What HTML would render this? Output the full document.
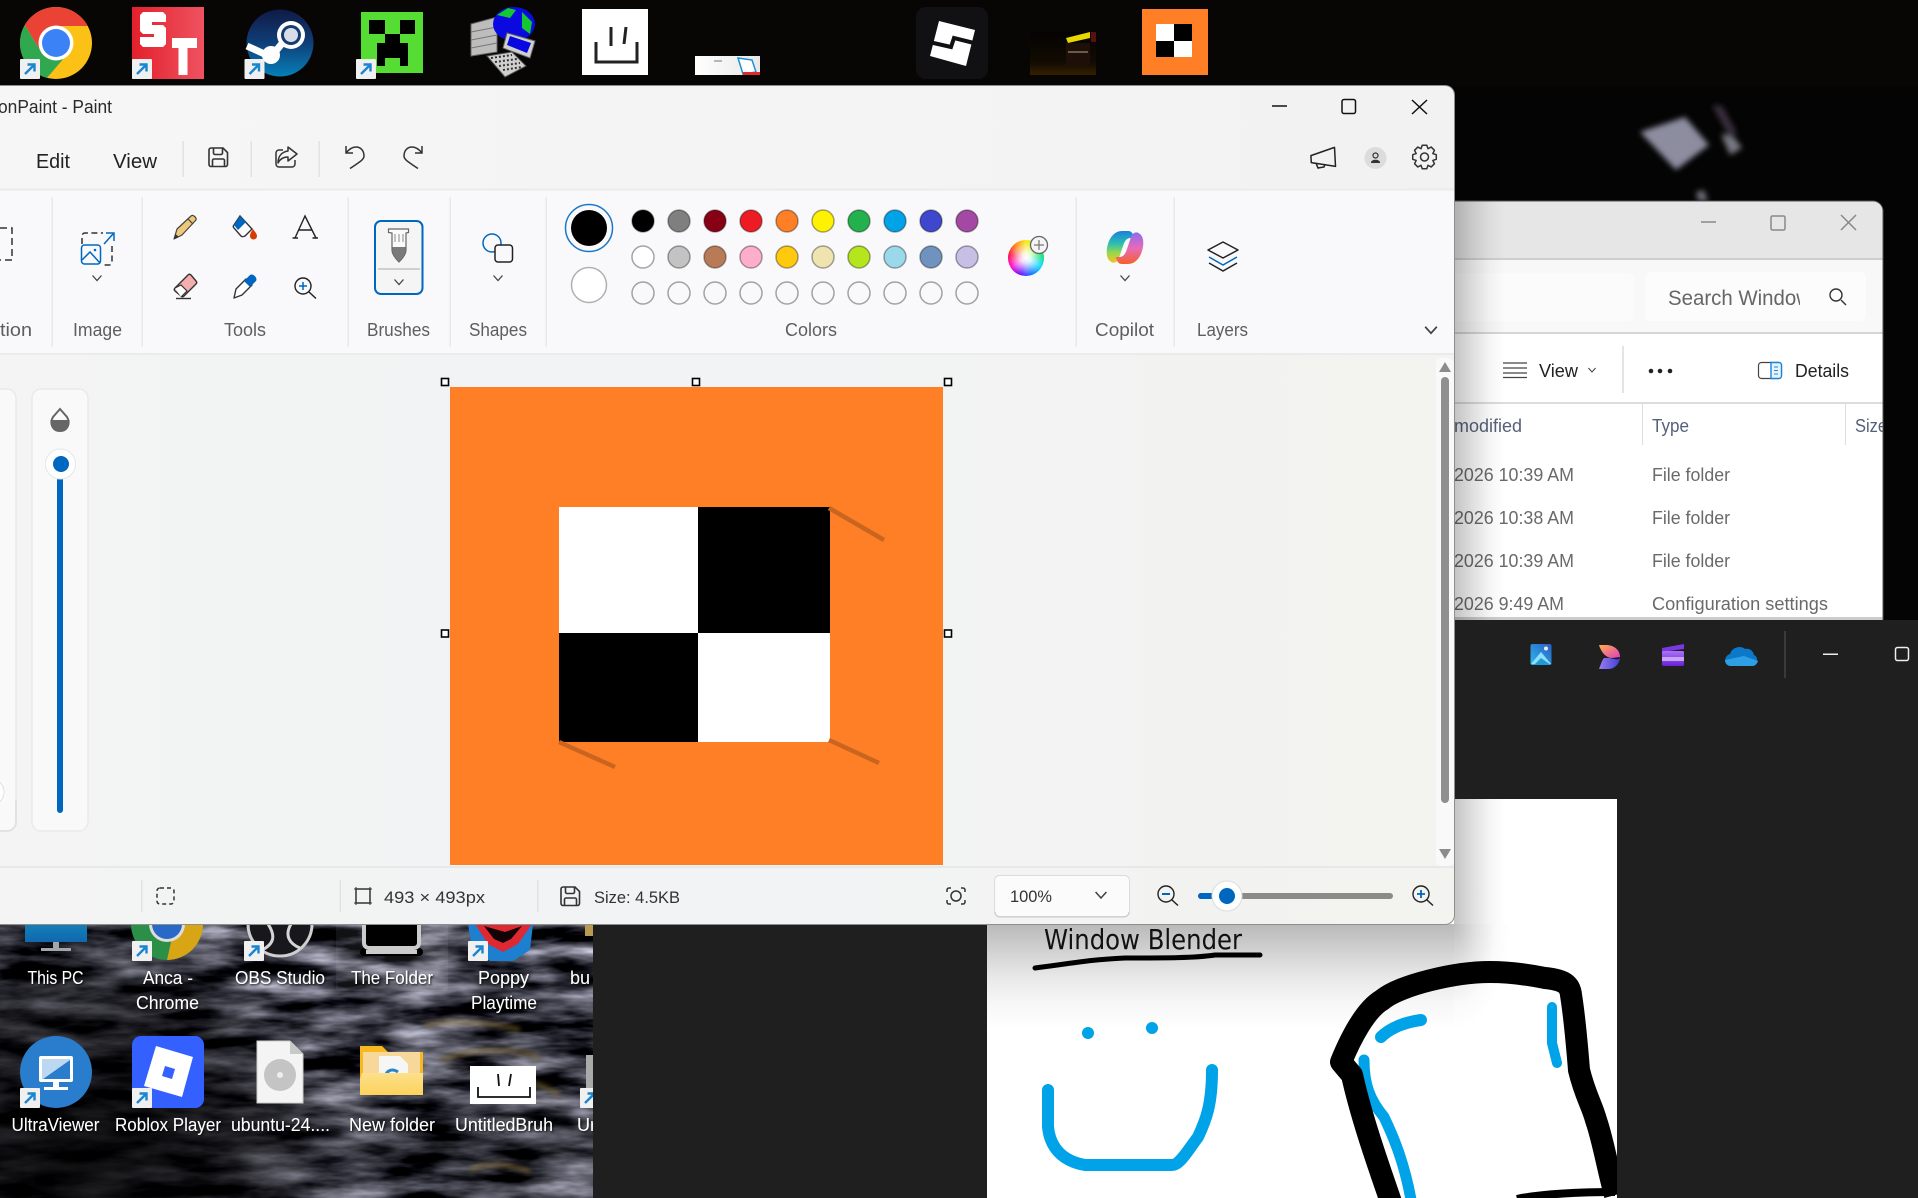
<!DOCTYPE html>
<html lang="en"><head><meta charset="utf-8"><title>Paint</title>
<style>
html,body{margin:0;padding:0;width:1918px;height:1198px;overflow:hidden;background:#050505}
svg{position:absolute;left:0;top:0;display:block}
text{font-family:"Liberation Sans",sans-serif}
.lb{font-size:18px;fill:#5e5e5e}
.st{font-size:17px;fill:#333}
.ex{font-size:18px;fill:#6a6a6a}
.hd{font-size:18px;fill:#55617a}
.dk{font-size:18px;fill:#fff}
#wheel{position:absolute;left:1007.5px;top:240px;width:36px;height:36px;border-radius:50%;background:radial-gradient(circle,#fff 0,rgba(255,255,255,.85) 20%,rgba(255,255,255,0) 72%),conic-gradient(from 0deg,#ffe600,#8cff00,#00e070,#00d8ff,#0070ff,#6a00ff,#ff00d0,#ff0040,#ff7a00,#ffe600)}
</style></head><body>
<svg width="1918" height="1198" viewBox="0 0 1918 1198" xmlns="http://www.w3.org/2000/svg">
<defs>
<filter id="water" x="0" y="0" width="100%" height="100%" color-interpolation-filters="sRGB"><feTurbulence type="fractalNoise" baseFrequency="0.013 0.055" numOctaves="4" seed="11"/><feColorMatrix values="1.5 0 0 0 -0.47  1.5 0 0 0 -0.47  1.6 0 0 0 -0.47  0 0 0 0 1"/></filter>
<filter id="b2" x="-20%" y="-100%" width="140%" height="300%"><feGaussianBlur stdDeviation="2.500"/></filter>
<filter id="b3" x="-30%" y="-30%" width="160%" height="160%"><feGaussianBlur stdDeviation="3"/></filter>
<filter id="ts" x="-10%" y="-30%" width="120%" height="160%"><feDropShadow dx="1" dy="1" stdDeviation="1" flood-color="#000" flood-opacity=".9"/></filter>
<clipPath id="desk"><rect x="0" y="924" width="593" height="274"/></clipPath>
<clipPath id="exp"><path d="M1400 201H1873a10 10 0 0 1 10 10V620H1400z"/></clipPath>
<clipPath id="srch"><rect x="1660" y="270" width="140" height="50"/></clipPath>
<clipPath id="cnv"><rect x="987" y="799" width="630" height="399"/></clipPath>
<clipPath id="pw"><path d="M-10 86H1445a9 9 0 0 1 9 9V915a9 9 0 0 1-9 9H-10z"/></clipPath>
<linearGradient id="cb" x1="0" x2="1" y1="0" y2="0"><stop offset="0" stop-color="#f3f4f3"/><stop offset=".45" stop-color="#f1f3f5"/><stop offset="1" stop-color="#f3f3ef"/></linearGradient>
<linearGradient id="tb" x1="0" x2="1" y1="0" y2="0"><stop offset="0" stop-color="#f6f6f6"/><stop offset="1" stop-color="#f2f2f2"/></linearGradient>
<linearGradient id="stm" x1="0" x2="0" y1="0" y2="1"><stop offset="0" stop-color="#111a45"/><stop offset=".5" stop-color="#0f3f78"/><stop offset="1" stop-color="#0780b8"/></linearGradient>
<linearGradient id="strd" x1="0" x2="1" y1="0" y2="0"><stop offset="0" stop-color="#e3202c"/><stop offset="1" stop-color="#ef5260"/></linearGradient>
<linearGradient id="pc" x1="0" x2="0" y1="0" y2="1"><stop offset="0" stop-color="#1ba0c0"/><stop offset="1" stop-color="#1068ae"/></linearGradient>
<linearGradient id="ph" x1="0" x2="1" y1="1" y2="0"><stop offset="0" stop-color="#2fb7ea"/><stop offset="1" stop-color="#2a5fc4"/></linearGradient>
<linearGradient id="co1" x1="0" x2="0" y1="0" y2="1"><stop offset="0" stop-color="#1b7ee0"/><stop offset=".4" stop-color="#2cc0b0"/><stop offset=".7" stop-color="#9cd84a"/><stop offset="1" stop-color="#f5c020"/></linearGradient>
<linearGradient id="co2" x1="0" x2="0" y1="0" y2="1"><stop offset="0" stop-color="#8a6cf0"/><stop offset=".5" stop-color="#e86ab8"/><stop offset="1" stop-color="#f5602c"/></linearGradient>
<linearGradient id="d1" x1="0" x2="1" y1="0" y2="1"><stop offset="0" stop-color="#ffb04a"/><stop offset="1" stop-color="#e03cc0"/></linearGradient>
<linearGradient id="d2" x1="0" x2="1" y1="0" y2="0"><stop offset="0" stop-color="#9a7cf0"/><stop offset="1" stop-color="#4040d8"/></linearGradient>
<linearGradient id="cl" x1="0" x2="0" y1="0" y2="1"><stop offset="0" stop-color="#a874f5"/><stop offset="1" stop-color="#6a20d8"/></linearGradient>
<linearGradient id="fold" x1="0" x2="0" y1="0" y2="1"><stop offset="0" stop-color="#fde08a"/><stop offset="1" stop-color="#fbd25c"/></linearGradient>
<linearGradient id="dim2" x1="0" x2="0" y1="0" y2="1"><stop offset="0" stop-color="#000" stop-opacity=".05"/><stop offset=".55" stop-color="#000" stop-opacity=".15"/><stop offset=".8" stop-color="#000" stop-opacity=".35"/><stop offset="1" stop-color="#000" stop-opacity=".2"/></linearGradient>
<radialGradient id="dimr" gradientUnits="userSpaceOnUse" cx="70" cy="1170" r="270"><stop offset="0" stop-color="#000" stop-opacity=".85"/><stop offset=".6" stop-color="#000" stop-opacity=".55"/><stop offset="1" stop-color="#000" stop-opacity="0"/></radialGradient>
<linearGradient id="thm" x1="0" x2="1" y1="0" y2="0"><stop offset="0" stop-color="#fff"/><stop offset="1" stop-color="#e8e8e8"/></linearGradient>
<linearGradient id="dk" x1="0" x2="0" y1="0" y2="1"><stop offset="0" stop-color="#040302"/><stop offset=".7" stop-color="#120b02"/><stop offset="1" stop-color="#352100"/></linearGradient>
<linearGradient id="cvB" x1="0" x2="0" y1="0" y2="1"><stop offset="0" stop-color="#b9b9b9"/><stop offset=".25" stop-color="#d1d1d1"/><stop offset=".5" stop-color="#e8e8e8"/><stop offset=".75" stop-color="#f7f7f7"/><stop offset="1" stop-color="#fff"/></linearGradient>
<linearGradient id="cvR" x1="0" x2="1" y1="0" y2="0"><stop offset="0" stop-color="#c4c4c4"/><stop offset=".35" stop-color="#dedede"/><stop offset=".7" stop-color="#f5f5f5"/><stop offset="1" stop-color="#fff"/></linearGradient>
<radialGradient id="cvC" cx="0" cy="0" r="1"><stop offset="0" stop-color="#bdbdbd"/><stop offset=".4" stop-color="#e2e2e2"/><stop offset=".75" stop-color="#fafafa"/><stop offset="1" stop-color="#fff"/></radialGradient>
<linearGradient id="shR" x1="0" x2="1" y1="0" y2="0"><stop offset="0" stop-color="#000" stop-opacity=".24"/><stop offset=".35" stop-color="#000" stop-opacity=".13"/><stop offset=".7" stop-color="#000" stop-opacity=".04"/><stop offset="1" stop-color="#000" stop-opacity="0"/></linearGradient>
<g id="sc"><rect width="20" height="20" fill="#f0f0f0" rx="1"/><path d="M5 15L14 6M7.5 5.5H14.5V12.5" stroke="#1a86d0" stroke-width="2.4" fill="none"/></g>
<path id="ch" d="M-4.5-2.5L0 2.5L4.5-2.5" fill="none" stroke="#444" stroke-width="1.3"/>
<g id="save" fill="none" stroke="#333" stroke-width="1.6"><path d="M3 1H15L19.5 5.5V17.5a2 2 0 0 1-2 2H3a2 2 0 0 1-2-2V3a2 2 0 0 1 2-2z"/><path d="M5.5 1V6a1.5 1.5 0 0 0 1.5 1.5H13A1.5 1.5 0 0 0 14.500 6V1M4.500 19.500V13.500a1.500 1.500 0 0 1 1.500-1.500H15a1.500 1.500 0 0 1 1.500 1.500V19.500"/></g>
</defs>

<!-- wallpaper -->
<rect width="1918" height="1198" fill="#040404"/>
<rect x="0" y="0" width="1918" height="86" fill="#070605"/>
<g filter="url(#b3)" opacity=".78"><path d="M1640 132L1685 117L1709 145L1676 170Z" fill="#b4b4cc"/><path d="M1712 105L1722 106L1737 133L1729 136Z" fill="#4a3a50"/><path d="M1721 134L1734 137L1742 148L1730 155Z" fill="#9a9aa8"/><path d="M1696 192L1704 190L1708 201L1698 201Z" fill="#8a8a98"/></g>

<!-- desktop water -->
<g clip-path="url(#desk)">
<rect x="0" y="924" width="593" height="274" fill="#2a2a2e"/>
<rect x="0" y="924" width="593" height="274" filter="url(#water)"/>
<rect x="0" y="924" width="593" height="274" fill="url(#dim2)"/>
<rect x="0" y="924" width="593" height="274" fill="url(#dimr)"/>
<g filter="url(#b2)" fill="none" stroke="#8a7238" stroke-width="5" opacity=".55"><path d="M425 1025C450 1020 490 1022 520 1030"/><path d="M440 1060C470 1050 510 1045 540 1058"/><path d="M500 1085C515 1078 535 1080 560 1095"/><path d="M470 1170C485 1163 510 1163 530 1172"/></g>
<rect x="585" y="924" width="8" height="12" fill="#b89a50"/>
<rect x="336" y="924" width="112" height="67" fill="#fff" opacity=".07" rx="3"/>
<!-- row 1 partial icons -->
<path d="M25 900H87V942H25z" fill="url(#pc)"/><rect x="53" y="942" width="6" height="6" fill="#a0a8ae"/><rect x="41" y="948" width="30" height="3" fill="#a0a8ae"/>
<circle cx="167" cy="924" r="36" fill="#2b8f47"/><path d="M167 960A36 36 0 0 0 203 924H175z" fill="#d8a515"/><circle cx="167" cy="924" r="18" fill="#ddd"/><circle cx="167" cy="924" r="15" fill="#2a68c8"/>
<use href="#sc" x="132" y="941"/>
<circle cx="280" cy="924" r="32" fill="#17171c" stroke="#cfcfcf" stroke-width="3"/><path d="M268 924C276 936 274 944 262 950M291 924C284 936 290 944 300 948" stroke="#d5d5d5" stroke-width="3" fill="none"/><use href="#sc" x="244" y="941"/>
<rect x="360" y="948" width="63" height="8" rx="4" fill="#000"/><rect x="366" y="950" width="51" height="4" fill="#ccc"/><rect x="364" y="915" width="55" height="33" rx="5" fill="#000" stroke="#ccc" stroke-width="4"/>
<path d="M468 924H533L530 950L513 961H490L472 948Z" fill="#1d7fd0"/><path d="M475 924H532L518 944L503 952L488 944Z" fill="#e02832"/><path d="M484 926L505 932L522 926L511 939L503 943L494 939Z" fill="#120406"/><use href="#sc" x="468" y="941"/>
<!-- row 2 -->
<circle cx="56" cy="1072" r="36" fill="#2a7ccc"/><rect x="39" y="1056" width="34" height="26" rx="2" fill="#fff"/><path d="M42 1059H70V1060L43 1079H42z" fill="#bcd8f0"/><path d="M70 1060L43 1079H70z" fill="#2a7ccc"/><rect x="53" y="1082" width="6" height="5" fill="#fff"/><rect x="44" y="1087" width="24" height="3" fill="#fff"/><use href="#sc" x="20" y="1088"/>
<rect x="132" y="1036" width="72" height="72" rx="9" fill="#3360ff"/><path d="M156 1046L193 1057L182 1097L144 1086Z" fill="#fff"/><path d="M165 1066L175 1069L172 1079L162 1076Z" fill="#3360ff"/><use href="#sc" x="132" y="1088"/>
<path d="M257 1041H290L303 1054V1103H257Z" fill="#f4f4f4" stroke="#ccc"/><path d="M290 1041V1054H303Z" fill="#c8c8c8"/><circle cx="280" cy="1075" r="16" fill="#c4c4c4"/><circle cx="280" cy="1075" r="3" fill="#eee"/>
<path d="M360 1095V1046H382L388 1052H423V1095Z" fill="#f8b820"/><rect x="363" y="1052" width="57" height="35" fill="#f7d79a"/><path d="M379 1056H400L408 1064V1085H379Z" fill="#f6f6f6"/><path d="M385 1080C385 1070 392 1068 398 1072" stroke="#2a86c8" stroke-width="3" fill="none"/><path d="M360 1079L362 1073H423V1095H360Z" fill="url(#fold)"/>
<rect x="470" y="1066" width="66" height="38" fill="#fff"/><path d="M478 1087V1097H530V1087M498 1074L499 1086M511 1074L509 1086" stroke="#111" stroke-width="1.800" fill="none"/>
<rect x="586" y="1055" width="12" height="50" fill="#aaa"/><use href="#sc" x="580" y="1088"/>
<!-- labels -->
<g filter="url(#ts)">
<text class="dk" x="27.5" y="984" textLength="56" lengthAdjust="spacingAndGlyphs">This PC</text>
<text class="dk" x="143" y="984" textLength="50" lengthAdjust="spacingAndGlyphs">Anca -</text>
<text class="dk" x="136" y="1009" textLength="63" lengthAdjust="spacingAndGlyphs">Chrome</text>
<text class="dk" x="235" y="984" textLength="90" lengthAdjust="spacingAndGlyphs">OBS Studio</text>
<text class="dk" x="351" y="984" textLength="82" lengthAdjust="spacingAndGlyphs">The Folder</text>
<text class="dk" x="478" y="984" textLength="51" lengthAdjust="spacingAndGlyphs">Poppy</text>
<text class="dk" x="471" y="1009" textLength="66" lengthAdjust="spacingAndGlyphs">Playtime</text>
<text class="dk" x="570" y="984">bu</text>
<text class="dk" x="11.500" y="1131" textLength="88" lengthAdjust="spacingAndGlyphs">UltraViewer</text>
<text class="dk" x="115" y="1131" textLength="106" lengthAdjust="spacingAndGlyphs">Roblox Player</text>
<text class="dk" x="231" y="1131" textLength="99" lengthAdjust="spacingAndGlyphs">ubuntu-24....</text>
<text class="dk" x="349" y="1131" textLength="86" lengthAdjust="spacingAndGlyphs">New folder</text>
<text class="dk" x="455" y="1131" textLength="98" lengthAdjust="spacingAndGlyphs">UntitledBruh</text>
<text class="dk" x="577" y="1131">Ur</text>
</g>
</g>

<!-- dark app window behind -->
<rect x="593" y="620" width="1325" height="578" fill="#1f1f1f"/>
<rect x="987" y="799" width="630" height="399" fill="#fff"/>
<rect x="987" y="924" width="467" height="106" fill="url(#cvB)"/>
<rect x="1454" y="799" width="51" height="125" fill="url(#cvR)"/>
<rect x="1454" y="924" width="56" height="106" fill="url(#cvC)"/>
<g clip-path="url(#cnv)">
<text x="1044" y="949" font-size="28" fill="#111" textLength="198" lengthAdjust="spacingAndGlyphs" style="font-family:'DejaVu Sans',sans-serif">Window Blender</text>
<path d="M1035 968C1075 963 1085 960 1125 958C1165 958 1195 958 1215 955C1235 955 1250 955 1260 955" stroke="#000" stroke-width="5" fill="none" stroke-linecap="round"/>
<g fill="none" stroke="#00a2e8" stroke-linecap="round" stroke-linejoin="round">
<path d="M1048 1090V1127C1050 1147 1062 1161 1085 1165H1172C1180 1165 1188 1150 1198 1137C1206 1120 1212 1105 1212 1070" stroke-width="12"/>
<path d="M1381 1037C1390 1028 1405 1022 1421 1020" stroke-width="12"/>
<path d="M1552 1007V1043L1557 1063" stroke-width="10"/>
<path d="M1364 1060C1364 1085 1370 1100 1384 1117C1395 1140 1405 1165 1412 1205" stroke-width="11"/>
</g>
<circle cx="1088" cy="1033" r="6" fill="#00a2e8"/><circle cx="1152" cy="1028" r="6" fill="#00a2e8"/>
<path d="M1392 1205C1380 1170 1362 1120 1352 1075L1341 1062C1350 1040 1365 1010 1382 1000C1400 985 1455 972 1490 972C1510 972 1530 975 1545 978C1565 980 1570 985 1571 995C1575 1020 1577 1045 1579 1070C1585 1095 1592 1105 1596 1120C1603 1140 1608 1170 1615 1195" fill="none" stroke="#000" stroke-width="22" stroke-linejoin="round"/>
<path d="M1517 1199C1540 1194 1580 1192 1615 1192" fill="none" stroke="#000" stroke-width="8"/>
</g>

<!-- explorer -->
<g clip-path="url(#exp)">
<rect x="1400" y="198" width="490" height="425" fill="#fff"/>
<rect x="1400" y="201" width="490" height="57" fill="#e6e6e6"/>
<rect x="1400" y="258" width="490" height="2" fill="#cfcfcf"/>
<rect x="1400" y="260" width="490" height="72" fill="#f8f8f8"/>
<rect x="1400" y="332" width="490" height="2" fill="#d6d6d6"/>
<rect x="1400" y="402" width="490" height="2" fill="#dcdcdc"/>
<rect x="1400" y="273" width="234" height="48" rx="6" fill="#fbfbfb"/>
<rect x="1645" y="272" width="221" height="49" rx="6" fill="#fcfcfc"/>
<text clip-path="url(#srch)" x="1668" y="305" font-size="21" fill="#666" textLength="143" lengthAdjust="spacingAndGlyphs">Search Window</text>
<circle cx="1836" cy="295" r="6" fill="none" stroke="#333" stroke-width="1.400"/><path d="M1841 300L1846 305" stroke="#333" stroke-width="1.400"/>
<g stroke="#888" fill="none" stroke-width="1.500"><path d="M1701 222H1716"/><rect x="1771" y="216" width="14" height="14" rx="1.500"/><path d="M1841 215L1856 230M1856 215L1841 230"/></g>
<g stroke="#444" stroke-width="1.300"><path d="M1503 363H1527M1503 368H1527M1503 373H1527M1503 377.500H1527"/></g>
<text x="1539" y="377" font-size="18" fill="#222" textLength="39" lengthAdjust="spacingAndGlyphs">View</text>
<use href="#ch" transform="translate(1592 370) scale(.8)"/>
<rect x="1622" y="346" width="2" height="47" fill="#e4e4e4"/>
<circle cx="1651" cy="371" r="2.300" fill="#222"/><circle cx="1660" cy="371" r="2.300" fill="#222"/><circle cx="1670" cy="371" r="2.300" fill="#222"/>
<rect x="1758.500" y="362.500" width="23" height="16" rx="3" fill="#fff" stroke="#444" stroke-width="1.200"/><path d="M1771 362.500H1779a2.500 2.500 0 0 1 2.500 2.500V376a2.500 2.500 0 0 1-2.500 2.500H1771z" fill="#e8f3fc" stroke="#1a86d8" stroke-width="1.400"/><path d="M1774 367H1778M1774 370.500H1778M1774 374H1778" stroke="#1a86d8"/>
<text x="1795" y="377" font-size="18" fill="#222" textLength="54" lengthAdjust="spacingAndGlyphs">Details</text>
<text class="hd" x="1454" y="432" textLength="68" lengthAdjust="spacingAndGlyphs">modified</text>
<rect x="1642" y="404" width="1" height="41" fill="#ddd"/>
<text class="hd" x="1652" y="432" textLength="37" lengthAdjust="spacingAndGlyphs">Type</text>
<rect x="1845" y="404" width="1" height="41" fill="#ddd"/>
<text class="hd" x="1855" y="432" textLength="32" lengthAdjust="spacingAndGlyphs">Size</text>
<text class="ex" x="1454" y="481" textLength="120" lengthAdjust="spacingAndGlyphs">2026 10:39 AM</text>
<text class="ex" x="1454" y="524" textLength="120" lengthAdjust="spacingAndGlyphs">2026 10:38 AM</text>
<text class="ex" x="1454" y="567" textLength="120" lengthAdjust="spacingAndGlyphs">2026 10:39 AM</text>
<text class="ex" x="1454" y="610" textLength="110" lengthAdjust="spacingAndGlyphs">2026 9:49 AM</text>
<text class="ex" x="1652" y="481" textLength="78" lengthAdjust="spacingAndGlyphs">File folder</text>
<text class="ex" x="1652" y="524" textLength="78" lengthAdjust="spacingAndGlyphs">File folder</text>
<text class="ex" x="1652" y="567" textLength="78" lengthAdjust="spacingAndGlyphs">File folder</text>
<text class="ex" x="1652" y="610" textLength="176" lengthAdjust="spacingAndGlyphs">Configuration settings</text>
<rect x="1400" y="617" width="490" height="3" fill="#ccc"/>
</g>
<path d="M1454 201H1873a10 10 0 0 1 10 10V620" fill="none" stroke="#555" stroke-width="1"/>

<!-- dark window title icons -->
<rect x="1530.500" y="644" width="21" height="21" rx="2" fill="url(#ph)"/><path d="M1531 664L1541 652L1551 664Z" fill="#8fe0ff"/><path d="M1534 665L1541 658L1551 665Z" fill="#1f9ad8"/><circle cx="1546" cy="648.500" r="2" fill="#e8eefc"/>
<path d="M1599 645H1606C1614 645 1620 650 1620 657L1612 658C1606 658 1601 652 1599 645Z" fill="url(#d1)"/><path d="M1604 658H1610C1616 660 1620 660 1620 657C1620 662 1616 669 1608 669H1599C1601 664 1602 660 1604 658Z" fill="url(#d2)"/>
<path d="M1662 648L1684 644L1684 649L1662 652Z" fill="#7a38e0"/><rect x="1662" y="651" width="22" height="15" rx="1.500" fill="url(#cl)"/><rect x="1662" y="657" width="22" height="4" fill="#c8a4f6"/>
<path d="M1731 666C1724 666 1723 656 1730 654C1732 647 1741 645 1745 649C1750 648 1753 651 1754 655C1759 657 1758 666 1752 666Z" fill="#0c78c8"/><path d="M1731 666C1727 666 1725 663 1725 660L1744 656L1758 661C1757 664 1755 666 1752 666Z" fill="#2e9fe4"/>
<rect x="1784" y="631" width="2" height="47" fill="#3a3a3a"/>
<rect x="1823" y="653.500" width="15" height="1.500" fill="#eee"/>
<rect x="1895.500" y="647.500" width="13" height="13" rx="2" fill="none" stroke="#eee" stroke-width="1.500"/>

<!-- top desktop icons -->
<circle cx="56" cy="43" r="36" fill="#fbc116"/>
<path d="M56 26H87.700A36 36 0 0 0 24.800 25L41 52Z" fill="#ea4335"/>
<path d="M24.800 25A36 36 0 0 0 47 77.900L64 58L41 52Z" fill="#2fa84f"/>
<circle cx="56" cy="43" r="17.500" fill="#fff"/><circle cx="56" cy="43" r="14" fill="#3b82f6"/><use href="#sc" x="20" y="59"/>
<rect x="132" y="7" width="72" height="72" fill="url(#strd)"/>
<path d="M143 12H163L166 15V22H152V25H163L166 28V44L163 47H143L140 44V37H154V34H143L140 31V15Z" fill="#fff"/><path d="M172 38H197V48H187.500V75H178.500V48H172Z" fill="#fff"/><use href="#sc" x="132" y="59"/>
<circle cx="280" cy="43" r="33.500" fill="url(#stm)"/>
<path d="M247 46L271 57L284 41" fill="none" stroke="#fff" stroke-width="7"/><circle cx="291" cy="35" r="14" fill="#fff"/><circle cx="291" cy="35" r="10" fill="#153c72"/><circle cx="291" cy="35" r="7" fill="#d8dde8"/><circle cx="271" cy="55" r="9" fill="#fff"/><use href="#sc" x="244.500" y="59"/>
<rect x="361" y="12" width="62" height="61" fill="#55dd33"/><rect x="369" y="20" width="16" height="14" fill="#000"/><rect x="400" y="20" width="15" height="14" fill="#000"/><path d="M385 34H400V43H408V66H400V58H385V66H377V43H385Z" fill="#000"/><use href="#sc" x="356" y="59"/>
<!-- old computer icon -->
<path d="M471 24L497 17V52L471 56Z" fill="#bdbdbd" stroke="#666"/><path d="M471 32L497 27M471 40L497 35M471 48L497 43" stroke="#777"/>
<ellipse cx="514" cy="24" rx="21" ry="17" fill="#0a0ae0"/><path d="M497 15L508 8L516 10L510 18ZM522 12L532 22L530 34L522 28Z" fill="#14c832"/>
<path d="M507 33L535 41L530 58L503 48Z" fill="#cfcfcf" stroke="#666"/><path d="M510 36L531 43L527 53L507 45Z" fill="#0808e0"/>
<path d="M487 56L512 52L526 66L505 77Z" fill="#d0d0d0" stroke="#555"/><path d="M491 58L512 55M495 62L517 59M499 66L520 63M503 70L522 67" stroke="#333" stroke-width="2" stroke-dasharray="2 2"/>
<rect x="582" y="9" width="66" height="66" fill="#fff"/><path d="M596 42L596 62L637 62L637 42" stroke="#222" stroke-width="3" fill="none"/><path d="M611 27L611 46M626 27L624 44" stroke="#222" stroke-width="3" fill="none"/>
<rect x="695" y="56" width="65" height="19" fill="url(#thm)"/><path d="M714 61H722" stroke="#777"/><path d="M738 58L752 60L756 72L743 74Z" fill="#fff" stroke="#1a90d8" stroke-width="1.500"/><rect x="743" y="72" width="17" height="3" fill="#e02a2a"/>
<rect x="916" y="7" width="72" height="72" rx="10" fill="#111114"/><path d="M939 21L975 30L966 66L930 56Z" fill="#fff"/><path d="M929 42L951 47L954 38L974 43" fill="none" stroke="#111114" stroke-width="4"/>
<rect x="1030" y="32" width="66" height="43" fill="url(#dk)"/><path d="M1066 38L1090 32V38L1068 43Z" fill="#e8d800"/><rect x="1066" y="43" width="24" height="22" fill="#1c1008"/><rect x="1068" y="51" width="20" height="2" fill="#6a5a4a"/><rect x="1091" y="32" width="5" height="10" fill="#5a100c"/>
<rect x="1142" y="9" width="66" height="66" fill="#ff7f27"/><rect x="1156" y="24" width="18" height="17" fill="#fff"/><rect x="1174" y="24" width="18" height="17" fill="#000"/><rect x="1156" y="41" width="18" height="16" fill="#000"/><rect x="1174" y="41" width="18" height="16" fill="#fff"/>

<!-- paint shadow on the explorer window -->
<rect x="1454" y="201" width="51" height="419" fill="url(#shR)"/>
</svg>

<svg width="1918" height="1198" viewBox="0 0 1918 1198" xmlns="http://www.w3.org/2000/svg">
<!-- PAINT WINDOW -->
<path d="M-10 85H1445a10 10 0 0 1 10 10V915a10 10 0 0 1-10 10H-10z" fill="#8e8e8e"/>
<g clip-path="url(#pw)">
<rect x="0" y="86" width="1454" height="104" fill="url(#tb)"/>
<rect x="0" y="190" width="1454" height="164" fill="#f9f9fb"/>
<rect x="0" y="188.500" width="1454" height="2" fill="#ebebeb"/>
<rect x="0" y="353" width="1454" height="2" fill="#ebebeb"/>
<rect x="0" y="355" width="1454" height="569" fill="url(#cb)"/>
<rect x="0" y="866" width="1454" height="2" fill="#e8e8e8"/>
<rect x="1436" y="358" width="18" height="508" fill="#f9f9f9" rx="6"/>
</g>
<text x="-2" y="113" font-size="18" fill="#2a2a2a" textLength="114" lengthAdjust="spacingAndGlyphs">onPaint - Paint</text>
<g fill="none" stroke="#111" stroke-width="1.500"><path d="M1272 106H1287"/><rect x="1342" y="99.500" width="13.500" height="14" rx="2"/><path d="M1412 100L1427 114M1427 100L1412 114"/></g>
<text x="36" y="168" font-size="20" fill="#222" textLength="34" lengthAdjust="spacingAndGlyphs">Edit</text>
<text x="113" y="168" font-size="20" fill="#222" textLength="44" lengthAdjust="spacingAndGlyphs">View</text>
<g fill="#e2e2e2"><rect x="182.500" y="141" width="1.500" height="36"/><rect x="250.500" y="141" width="1.500" height="36"/><rect x="318.500" y="141" width="1.500" height="36"/></g>
<use href="#save" x="208" y="147"/>
<g fill="none" stroke="#333" stroke-width="1.500" stroke-linejoin="round"><path d="M283 150H279a3 3 0 0 0-3 3V164a3 3 0 0 0 3 3H292a3 3 0 0 0 3-3V160"/><path d="M288 147L297 154L288 161V157C283 157 280 159 278 163C278 156 282 152 288 151Z"/></g>
<g fill="none" stroke="#333" stroke-width="1.500"><path d="M346 146V153H353M346 153C350 148 353 147 356 147C361 147 364 151 364 156C364 160 358 163 350 168.500"/><path d="M422 146V153H415M422 153C418 148 415 147 412 147C407 147 404 151 404 156C404 160 410 163 418 168.500"/></g>
<path d="M1311 155L1335 148V167L1311 162Z" fill="none" stroke="#222" stroke-width="1.500" stroke-linejoin="round" transform="rotate(-3 1323 157)"/><path d="M1316 163L1318 168L1324 167L1325 164" fill="none" stroke="#222" stroke-width="1.500"/>
<circle cx="1375.500" cy="158" r="11" fill="#dcdcdc"/><circle cx="1375.500" cy="155.500" r="2.500" fill="none" stroke="#333" stroke-width="1.200"/><path d="M1371.500 162.500C1371.500 159.500 1379.500 159.500 1379.500 162.500Z" fill="#333" stroke="#333"/>
<g transform="translate(1424.500 157)" fill="none" stroke="#333" stroke-width="1.500" stroke-linejoin="round"><path d="M11.780-2.290L11.780 2.290L8.310 3.440L9.950 6.710L6.710 9.950L3.440 8.310L2.290 11.780L-2.290 11.780L-3.440 8.310L-6.710 9.950L-9.950 6.710L-8.310 3.440L-11.780 2.290L-11.780-2.290L-8.310-3.440L-9.950-6.710L-6.710-9.950L-3.440-8.310L-2.290-11.780L2.290-11.780L3.440-8.310L6.710-9.950L9.950-6.710L8.310-3.440Z"/><circle r="4"/></g>

<!-- ribbon separators -->
<g fill="#e9e9ec"><rect x="51.500" y="197" width="1.500" height="150"/><rect x="141.500" y="197" width="1.500" height="150"/><rect x="347.500" y="197" width="1.500" height="150"/><rect x="449.500" y="197" width="1.500" height="150"/><rect x="545.500" y="197" width="1.500" height="150"/><rect x="1075.500" y="197" width="1.500" height="150"/><rect x="1173.500" y="197" width="1.500" height="150"/></g>
<text class="lb" x="0" y="336" textLength="32" lengthAdjust="spacingAndGlyphs">tion</text>
<text class="lb" x="73" y="336" textLength="49" lengthAdjust="spacingAndGlyphs">Image</text>
<text class="lb" x="224" y="336" textLength="42" lengthAdjust="spacingAndGlyphs">Tools</text>
<text class="lb" x="367" y="336" textLength="63" lengthAdjust="spacingAndGlyphs">Brushes</text>
<text class="lb" x="469" y="336" textLength="58" lengthAdjust="spacingAndGlyphs">Shapes</text>
<text class="lb" x="785" y="336" textLength="52" lengthAdjust="spacingAndGlyphs">Colors</text>
<text class="lb" x="1095" y="336" textLength="59" lengthAdjust="spacingAndGlyphs">Copilot</text>
<text class="lb" x="1197" y="336" textLength="51" lengthAdjust="spacingAndGlyphs">Layers</text>
<use href="#ch" transform="translate(1431 330) scale(1.300)"/>
<!-- selection icon partial -->
<path d="M0 228H12V260H0" fill="none" stroke="#333" stroke-width="1.500" stroke-dasharray="7 4"/>
<!-- image -->
<path d="M82 244V236a3 3 0 0 1 3-3H103M112 246V262a3 3 0 0 1-3 3H104" fill="none" stroke="#333" stroke-width="1.500" stroke-dasharray="6 3.500"/>
<path d="M104 244L113 234M106 233H114V241" fill="none" stroke="#0067c0" stroke-width="1.500"/>
<rect x="81.500" y="245" width="19" height="19" rx="3" fill="none" stroke="#0067c0" stroke-width="1.500"/><path d="M82 260L90 252L100 263" fill="none" stroke="#0067c0" stroke-width="1.500"/><circle cx="95" cy="250" r="1.300" fill="#0067c0"/>
<use href="#ch" x="97" y="278"/>
<!-- tools -->
<path d="M174 239L177 229L191 216C193 214 197 218 196 220L182 235Z" fill="#edc77a" stroke="#444" stroke-width="1.200" stroke-linejoin="round"/><path d="M174 239L175.500 234L179 237Z" fill="#333"/><path d="M188 219L193 224" stroke="#444" stroke-width="1.200"/>
<path d="M240 216L252 229L245 236C243 237 242 237 241 236L234 228C233 227 233 226 234 225Z" fill="#fff" stroke="#333" stroke-width="1.400"/><path d="M240 216L246 222L238 230L234 225Z" fill="#0067c0"/><path d="M253 229C255 232 257 234 257 236A3.500 3.500 0 0 1 250 236C250 234 251 232 253 229Z" fill="#d83b01"/>
<path d="M295 238L305 216L316 238M298.500 230H312.500M292.500 238H298M312.500 238H318" fill="none" stroke="#222" stroke-width="1.400"/>
<path d="M175 288L188 275C189 274 190 274 191 275L196 281C197 282 197 283 196 284L184 296C183 297 182 297 181 296L175 291C174 290 174 289 175 288Z" fill="#f5aeae" stroke="#333" stroke-width="1.400"/><path d="M175 288L181 285L187 291L181 297" fill="#fff" stroke="#333" stroke-width="1.200"/><path d="M176 298.500H191" stroke="#333" stroke-width="1.400"/>
<path d="M234 298L236 289L246 279L252 285L242 295Z" fill="#fff" stroke="#333" stroke-width="1.400" stroke-linejoin="round"/><path d="M244 281L250 275C253 273 258 278 256 281L250 287Z" fill="#0067c0"/>
<circle cx="303" cy="286" r="8" fill="none" stroke="#222" stroke-width="1.400"/><path d="M309 292L316 298.500" stroke="#222" stroke-width="1.500"/><path d="M303 282V290M299 286H307" stroke="#0067c0" stroke-width="1.500"/>
<!-- brushes -->
<rect x="375" y="221" width="47.500" height="73" rx="6" fill="#f5f5f5" stroke="#0067c0" stroke-width="2"/>
<rect x="378" y="268" width="42" height="2" fill="#cfcfcf"/>
<use href="#ch" x="399" y="282"/>
<path d="M388.500 229H408.500V232.500L406 233V250C406 254 402 259 399 262C396 259 392 254 392 250V233L388.500 232.500Z" fill="#fafafa" stroke="#666" stroke-width="1.200"/><path d="M392.500 247H405.500V250C405.500 254 402 259 399 261.500C396 259 392.500 254 392.500 250Z" fill="#7a7a7a"/><path d="M395 234V242M399 234V242M403 234V242" stroke="#888"/>
<!-- shapes -->
<circle cx="492" cy="243" r="9" fill="none" stroke="#0067c0" stroke-width="1.500"/><rect x="495" y="245" width="17.500" height="17" rx="3" fill="#f9f9fb" stroke="#222" stroke-width="1.500"/><use href="#ch" x="498" y="278"/>
<!-- colours -->
<circle cx="589" cy="228" r="23.500" fill="#f9f9fb" stroke="#1a78c8" stroke-width="1.500"/><circle cx="589" cy="228" r="18" fill="#000"/>
<circle cx="589" cy="285" r="17.500" fill="#fff" stroke="#b0b0b0" stroke-width="1.500"/>
<g stroke="#000" stroke-opacity=".35" stroke-width="1.500">
<circle cx="643" cy="221" r="11" fill="#000"/><circle cx="679" cy="221" r="11" fill="#7f7f7f"/><circle cx="715" cy="221" r="11" fill="#880015"/><circle cx="751" cy="221" r="11" fill="#ed1c24"/><circle cx="787" cy="221" r="11" fill="#ff7f27"/><circle cx="823" cy="221" r="11" fill="#fff200"/><circle cx="859" cy="221" r="11" fill="#22b14c"/><circle cx="895" cy="221" r="11" fill="#00a2e8"/><circle cx="931" cy="221" r="11" fill="#3f48cc"/><circle cx="967" cy="221" r="11" fill="#a349a4"/>
<circle cx="643" cy="257" r="11" fill="#fff"/><circle cx="679" cy="257" r="11" fill="#c3c3c3"/><circle cx="715" cy="257" r="11" fill="#b97a57"/><circle cx="751" cy="257" r="11" fill="#ffaec9"/><circle cx="787" cy="257" r="11" fill="#ffc90e"/><circle cx="823" cy="257" r="11" fill="#efe4b0"/><circle cx="859" cy="257" r="11" fill="#b5e61d"/><circle cx="895" cy="257" r="11" fill="#99d9ea"/><circle cx="931" cy="257" r="11" fill="#7092be"/><circle cx="967" cy="257" r="11" fill="#c8bfe7"/>
<circle cx="643" cy="293" r="11" fill="none"/><circle cx="679" cy="293" r="11" fill="none"/><circle cx="715" cy="293" r="11" fill="none"/><circle cx="751" cy="293" r="11" fill="none"/><circle cx="787" cy="293" r="11" fill="none"/><circle cx="823" cy="293" r="11" fill="none"/><circle cx="859" cy="293" r="11" fill="none"/><circle cx="895" cy="293" r="11" fill="none"/><circle cx="931" cy="293" r="11" fill="none"/><circle cx="967" cy="293" r="11" fill="none"/>
</g>
<!-- copilot -->
<path d="M1122 231H1128C1132 231 1133 234 1134 238L1131 238C1127 238 1125 240 1123 246L1119 258C1117 263 1113 264 1110 261C1106 258 1106 250 1108 244C1110 237 1115 231 1122 231Z" fill="url(#co1)"/>
<path d="M1128 264H1122C1118 264 1117 261 1116 257L1119 257C1123 257 1125 255 1127 249L1131 237C1133 232 1137 231 1140 234C1144 237 1144 245 1142 251C1140 258 1135 264 1128 264Z" fill="url(#co2)"/>
<use href="#ch" x="1125" y="278"/>
<!-- layers -->
<path d="M1223 242L1238 250L1223 258L1208 250Z" fill="none" stroke="#222" stroke-width="1.500" stroke-linejoin="round"/><path d="M1209 257L1223 265L1237 257" fill="none" stroke="#0067c0" stroke-width="1.500"/><path d="M1209 263L1223 271L1237 263" fill="none" stroke="#222" stroke-width="1.500"/>

<!-- canvas -->
<rect x="-10" y="389" width="26" height="442" rx="9" fill="#f9f9f9" stroke="#eaeaea" stroke-width="1.500"/>
<path d="M16 800V822a9 9 0 0 1-9 9H-2" stroke="#e2e2e2" stroke-width="2" fill="none"/>
<circle cx="-9" cy="792" r="13" fill="#fff" stroke="#e0e0e0"/>
<rect x="32" y="389" width="56" height="442" rx="9" fill="#f9f9f9" stroke="#eaeaea" stroke-width="1.500"/>
<path d="M60 409L67 417C71 424 67 431 60 431C53 431 49 424 53 417Z" fill="#f9f9f9" stroke="#666" stroke-width="2"/><path d="M50.500 420H69.500C70 427 66 431.500 60 431.500C54 431.500 50 427 50.500 420Z" fill="#666"/>
<rect x="57" y="470" width="6" height="343" rx="3" fill="#0067c0"/>
<circle cx="60.500" cy="464" r="15" fill="#fff" stroke="#e6e6e6"/><circle cx="61" cy="464" r="8" fill="#0067c0"/>
<rect x="450" y="387" width="493" height="478" fill="#ff7f27"/>
<rect x="559" y="507" width="139" height="126" fill="#fff"/><rect x="698" y="507" width="132" height="126" fill="#000"/><rect x="559" y="633" width="139" height="109" fill="#000"/><rect x="698" y="633" width="132" height="109" fill="#fff"/>
<g stroke="#c9651f" stroke-width="4.500" fill="none"><path d="M829 508L884 540"/><path d="M559 742L615 767"/><path d="M829 740L879 763"/></g>
<g fill="#fff" stroke="#000" stroke-width="1.600"><rect x="441.500" y="378.500" width="7" height="7"/><rect x="692.500" y="378.500" width="7" height="7"/><rect x="944.500" y="378.500" width="7" height="7"/><rect x="441.500" y="630" width="7" height="7"/><rect x="944.500" y="630" width="7" height="7"/></g>
<!-- scrollbar -->
<path d="M1439 372L1445 362L1451 372Z" fill="#8c8c8c"/><path d="M1439 849L1445 859L1451 849Z" fill="#8c8c8c"/>
<rect x="1441" y="377" width="8" height="426" rx="4" fill="#8f8f8f"/>
<!-- status -->
<rect x="141" y="880" width="1.500" height="32" fill="#e2e2e2"/><rect x="339.500" y="880" width="1.500" height="32" fill="#e2e2e2"/><rect x="537" y="880" width="1.500" height="32" fill="#e2e2e2"/>
<rect x="157" y="888" width="17" height="16" rx="3" fill="none" stroke="#333" stroke-width="1.500" stroke-dasharray="4 3"/>
<rect x="356" y="889" width="14" height="14" fill="none" stroke="#333" stroke-width="1.500"/><path d="M354 889H358M368 889H372M354 903H358M368 903H372M356 887V891M370 887V891M356 901V905M370 901V905" stroke="#333"/>
<text class="st" x="384" y="903" textLength="101" lengthAdjust="spacingAndGlyphs">493 × 493px</text>
<use href="#save" x="560" y="886"/>
<text class="st" x="594" y="903" textLength="86" lengthAdjust="spacingAndGlyphs">Size: 4.5KB</text>
<path d="M947 892V890a2 2 0 0 1 2-2H951M961 888H963a2 2 0 0 1 2 2V892M965 900V902a2 2 0 0 1-2 2H961M951 904H949a2 2 0 0 1-2-2V900" fill="none" stroke="#333" stroke-width="1.500"/><circle cx="956" cy="896" r="5" fill="none" stroke="#333" stroke-width="1.500"/>
<rect x="994.500" y="875.500" width="135" height="41" rx="5" fill="#fbfbfb" stroke="#dcdcdc"/><path d="M995 912a5 5 0 0 0 5 5H1124a5 5 0 0 0 5-5" fill="none" stroke="#c8c8c8"/>
<text class="st" x="1010" y="902" textLength="42" lengthAdjust="spacingAndGlyphs">100%</text>
<use href="#ch" transform="translate(1101 895) scale(1.200)"/>
<circle cx="1166" cy="894" r="8" fill="none" stroke="#222" stroke-width="1.400"/><path d="M1172 900L1178 905.500" stroke="#222" stroke-width="1.500"/><path d="M1162 894H1170" stroke="#0067c0" stroke-width="2"/>
<rect x="1198" y="893" width="195" height="6" rx="3" fill="#8a8a86"/><rect x="1198" y="893" width="20" height="6" rx="3" fill="#0067c0"/>
<circle cx="1227" cy="896" r="15" fill="#fff" stroke="#dcdcdc"/><circle cx="1227" cy="896" r="8" fill="#0067c0"/>
<circle cx="1421" cy="894" r="8" fill="none" stroke="#222" stroke-width="1.400"/><path d="M1427 900L1433 905.500" stroke="#222" stroke-width="1.500"/><path d="M1417 894H1425M1421 890V898" stroke="#0067c0" stroke-width="1.800"/>
</svg>
<div id="wheel"></div>
<svg width="1918" height="1198" viewBox="0 0 1918 1198" xmlns="http://www.w3.org/2000/svg" style="pointer-events:none">
<circle cx="1039" cy="245" r="8.500" fill="#f4f4f4" stroke="#666" stroke-width="1.300"/><path d="M1039 240V250M1034 245H1044" stroke="#777" stroke-width="1.200"/>
</svg>
</body></html>
